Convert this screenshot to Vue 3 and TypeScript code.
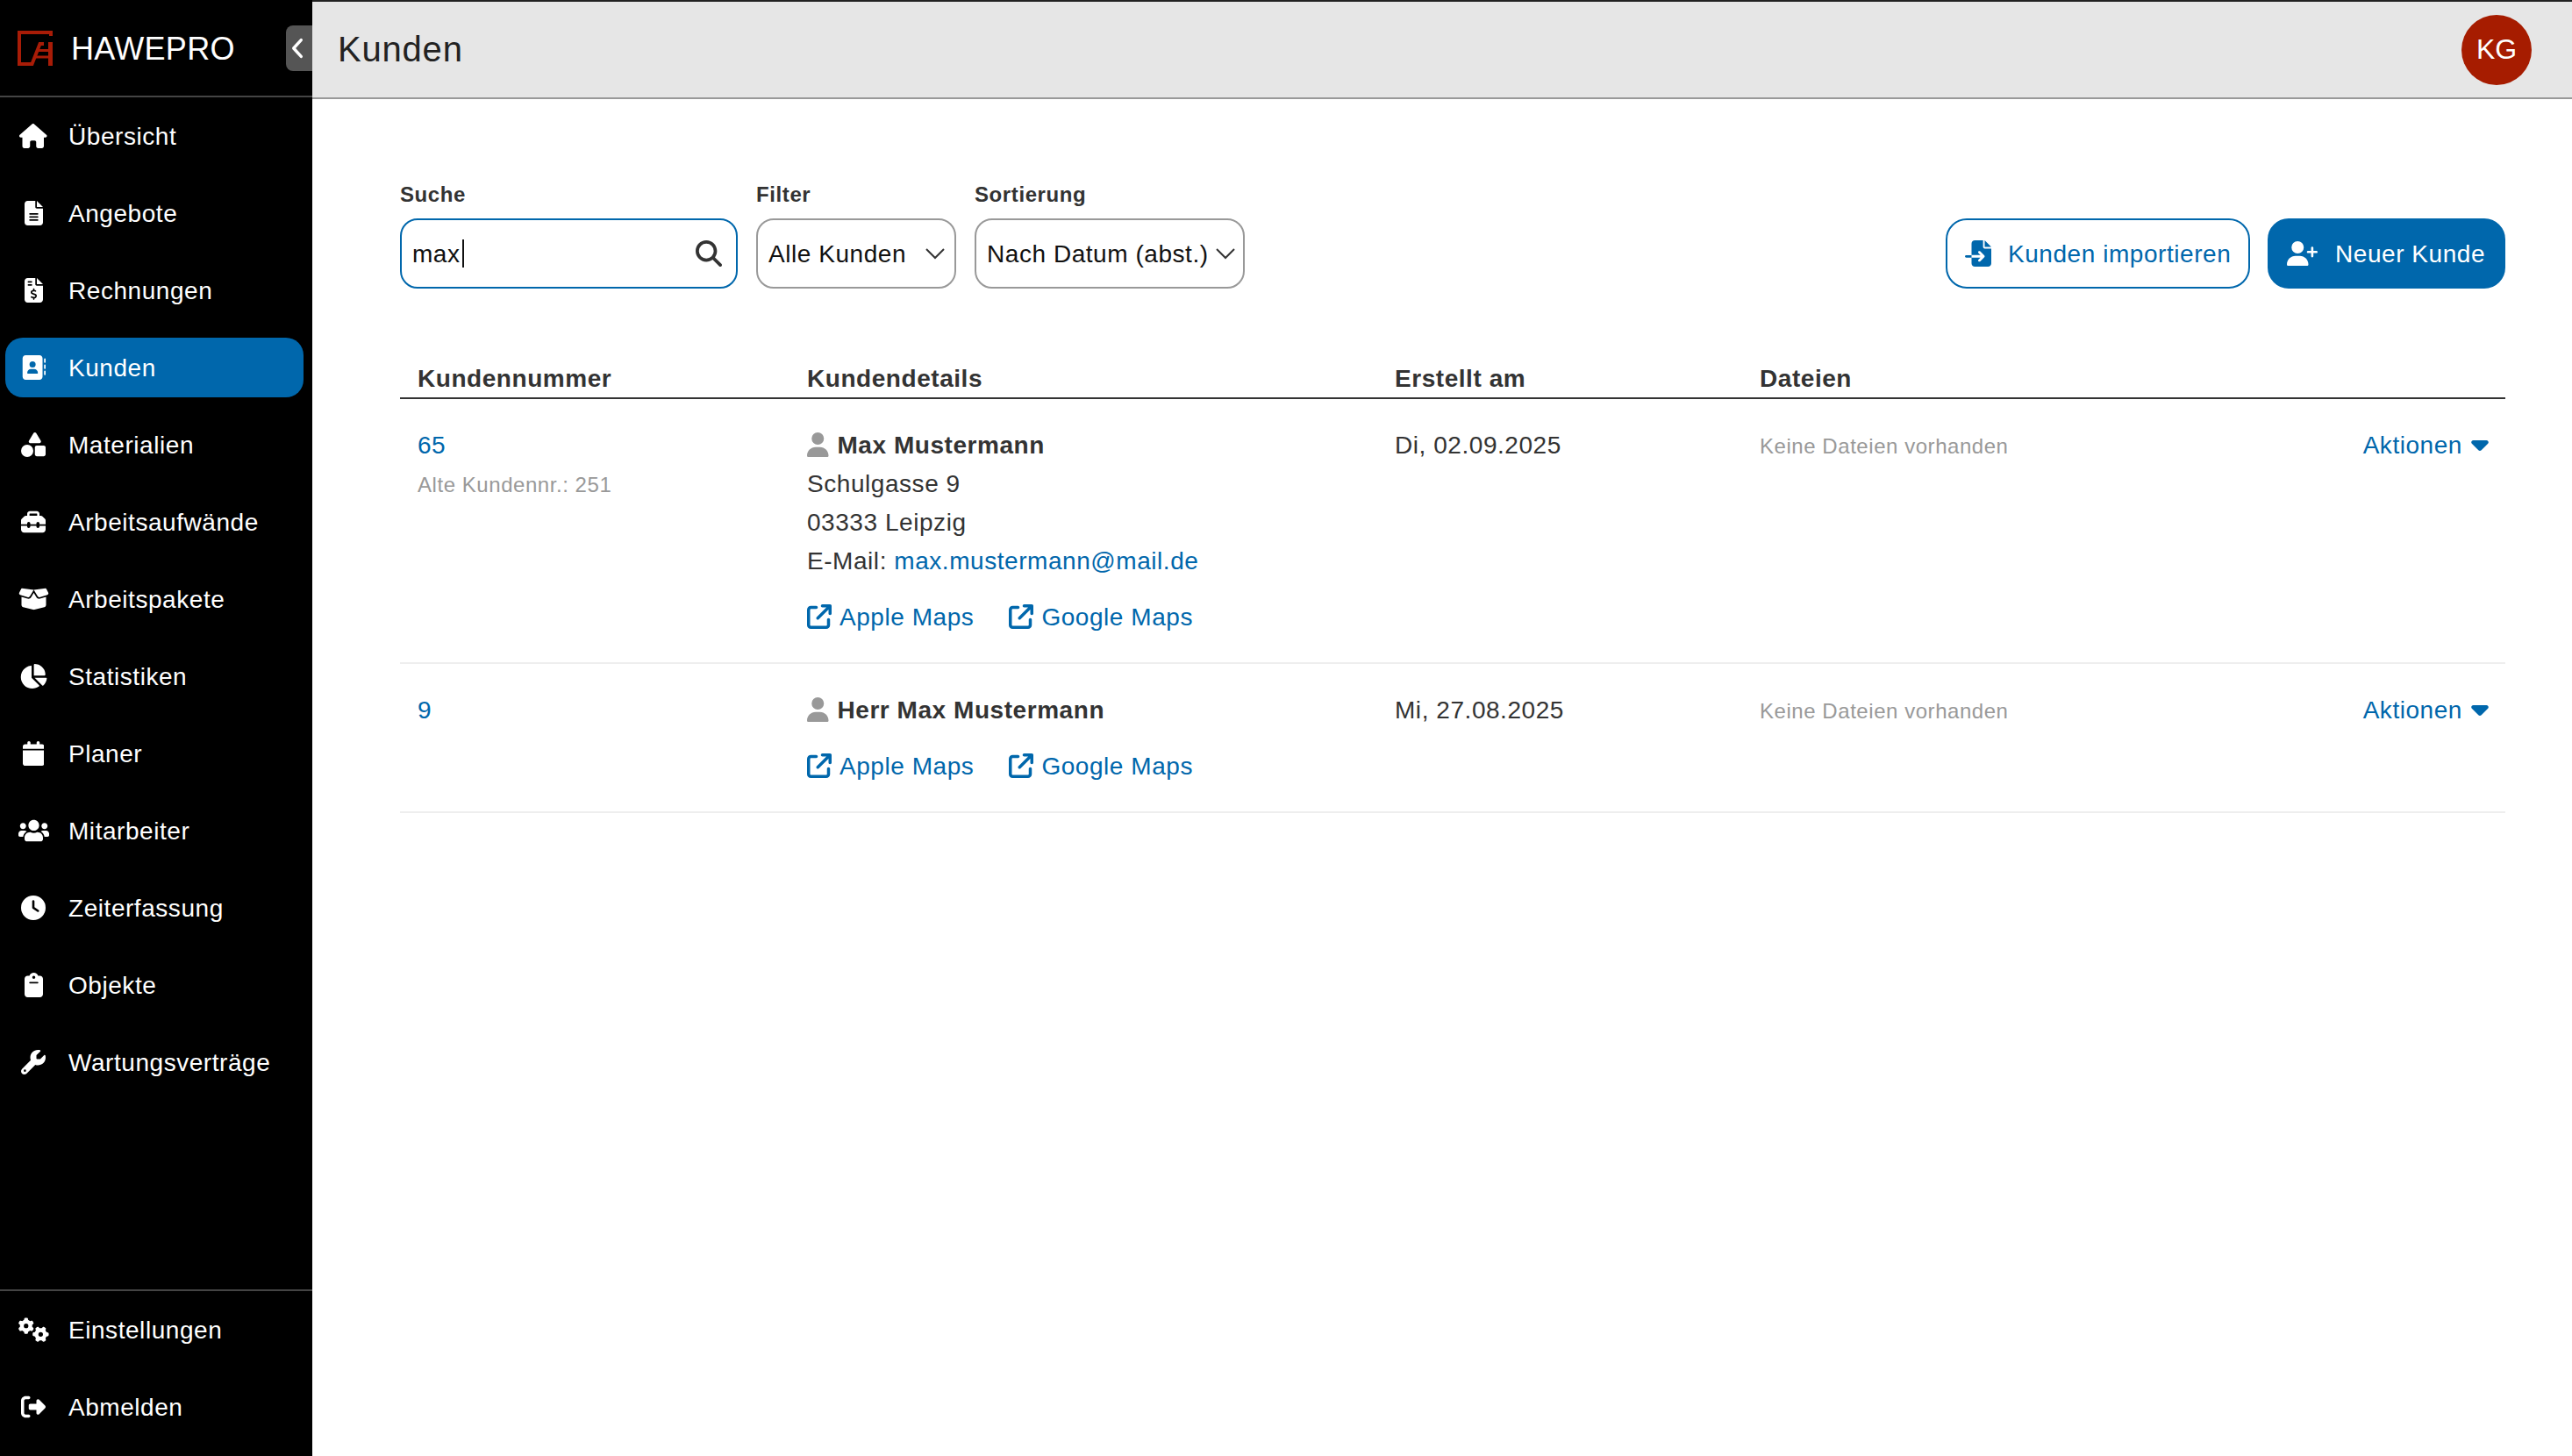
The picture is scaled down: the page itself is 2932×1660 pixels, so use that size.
<script setup lang="ts">
import { ref } from 'vue'

interface NavItem {
  label: string
  box: string
  d: string
  active?: boolean
}

interface Customer {
  number: string
  oldNumber?: string
  name: string
  street?: string
  city?: string
  email?: string
  created: string
}

const query = ref('max')

const navItems: NavItem[] = [
  { label: 'Übersicht', box: '0 0 576 512', d: 'M575.8 255.5c0 18-15 32.1-32 32.1h-32l.7 160.2c0 2.7-.2 5.4-.5 8.1V472c0 22.1-17.9 40-40 40H456c-1.1 0-2.2 0-3.3-.1c-1.4 .1-2.8 .1-4.2 .1H416 392c-22.1 0-40-17.9-40-40V448 384c0-17.7-14.3-32-32-32H256c-17.7 0-32 14.3-32 32v64 24c0 22.1-17.9 40-40 40H160 128.1c-1.5 0-3-.1-4.5-.2c-1.2 .1-2.4 .2-3.6 .2H104c-22.1 0-40-17.9-40-40V360c0-.9 0-1.9 .1-2.8V287.6H32c-18 0-32-14-32-32.1c0-9 3-17 10-24L266.4 8c7-7 15-8 22-8s15 2 21 7L564.8 231.5c8 7 12 15 11 24z' },
  { label: 'Angebote', box: '0 0 384 512', d: 'M64 0C28.7 0 0 28.7 0 64V448c0 35.3 28.7 64 64 64H320c35.3 0 64-28.7 64-64V160H256c-17.7 0-32-14.3-32-32V0H64zM256 0V128H384L256 0zM112 256H272c8.8 0 16 7.2 16 16s-7.2 16-16 16H112c-8.8 0-16-7.2-16-16s7.2-16 16-16zm0 64H272c8.8 0 16 7.2 16 16s-7.2 16-16 16H112c-8.8 0-16-7.2-16-16s7.2-16 16-16zm0 64H272c8.8 0 16 7.2 16 16s-7.2 16-16 16H112c-8.8 0-16-7.2-16-16s7.2-16 16-16z' },
  { label: 'Rechnungen', box: '0 0 384 512', d: 'M64 0C28.7 0 0 28.7 0 64V448c0 35.3 28.7 64 64 64H320c35.3 0 64-28.7 64-64V160H256c-17.7 0-32-14.3-32-32V0H64zM256 0V128H384L256 0zM64 80c0-8.8 7.2-16 16-16h64c8.8 0 16 7.2 16 16s-7.2 16-16 16H80c-8.8 0-16-7.2-16-16zm0 64c0-8.8 7.2-16 16-16h64c8.8 0 16 7.2 16 16s-7.2 16-16 16H80c-8.8 0-16-7.2-16-16zm128 72c8.8 0 16 7.2 16 16v17.3c8.5 1.2 16.7 3.1 24.1 5.1c8.5 2.3 13.6 11 11.3 19.6s-11 13.6-19.6 11.3c-11.1-3-22-5.2-32.1-5.3c-8.4-.1-17.4 1.8-23.6 5.5c-5.7 3.4-8.1 7.3-8.1 12.8c0 3.7 1.3 6.5 7.3 10.1c6.9 4.1 16.6 7.1 29.2 10.9l.5 .1 0 0 0 0c11.3 3.4 25.3 7.6 36.3 14.6c12.1 7.6 22.4 19.7 22.7 38.2c.3 19.3-9.6 33.3-22.9 41.6c-7.7 4.8-16.4 7.6-25.1 9.1V440c0 8.8-7.2 16-16 16s-16-7.2-16-16V422.2c-11.2-2.1-21.7-5.7-30.9-8.9l0 0c-2.1-.7-4.2-1.4-6.2-2.1c-8.4-2.8-12.9-11.9-10.1-20.2s11.9-12.9 20.2-10.1c2.5 .8 4.8 1.6 7.1 2.4l0 0 0 0 0 0c13.6 4.6 24.6 8.4 36.3 8.7c9.1 .3 17.9-1.7 23.7-5.3c5.1-3.2 7.9-7.3 7.8-14c-.1-4.6-1.8-7.8-7.7-11.6c-6.8-4.3-16.5-7.4-29-11.2l-1.6-.5 0 0c-11-3.3-24.3-7.3-34.8-13.7c-12-7.2-22.6-18.9-22.7-37.3c-.1-19.4 10.8-32.8 23.8-40.5c7.5-4.4 15.8-7.2 24.1-8.7V232c0-8.8 7.2-16 16-16z' },
  { label: 'Kunden', box: '0 0 512 512', active: true, d: 'M96 0C60.7 0 32 28.7 32 64V448c0 35.3 28.7 64 64 64H384c35.3 0 64-28.7 64-64V64c0-35.3-28.7-64-64-64H96zM208 288h64c44.2 0 80 35.8 80 80c0 8.8-7.2 16-16 16H144c-8.8 0-16-7.2-16-16c0-44.2 35.8-80 80-80zm-32-96a64 64 0 1 1 128 0 64 64 0 1 1 -128 0zM512 80c0-8.8-7.2-16-16-16s-16 7.2-16 16v64c0 8.8 7.2 16 16 16s16-7.2 16-16V80zM496 192c-8.8 0-16 7.2-16 16v64c0 8.8 7.2 16 16 16s16-7.2 16-16V208c0-8.8-7.2-16-16-16zm16 144c0-8.8-7.2-16-16-16s-16 7.2-16 16v64c0 8.8 7.2 16 16 16s16-7.2 16-16V336z' },
  { label: 'Materialien', box: '0 0 512 512', d: 'M315.4 15.5C309.7 5.9 299.2 0 288 0s-21.7 5.9-27.4 15.5l-96 160c-5.9 9.9-6.1 22.2-.4 32.2s16.3 16.2 27.8 16.2H384c11.5 0 22.2-6.2 27.8-16.2s5.5-22.3-.4-32.2l-96-160zM288 312V456c0 22.1 17.9 40 40 40H472c22.1 0 40-17.9 40-40V312c0-22.1-17.9-40-40-40H328c-22.1 0-40 17.9-40 40zM128 512a128 128 0 1 0 0-256 128 128 0 1 0 0 256z' },
  { label: 'Arbeitsaufwände', box: '0 0 512 512', d: 'M176 88v40H336V88c0-4.4-3.6-8-8-8H184c-4.4 0-8 3.6-8 8zm-48 40V88c0-30.9 25.1-56 56-56H328c30.9 0 56 25.1 56 56v40h28.1c12.7 0 24.9 5.1 33.9 14.1l51.9 51.9c9 9 14.1 21.2 14.1 33.9V304H384V288c0-17.7-14.3-32-32-32s-32 14.3-32 32v16H192V288c0-17.7-14.3-32-32-32s-32 14.3-32 32v16H0V227.9c0-12.7 5.1-24.9 14.1-33.9l51.9-51.9c9-9 21.2-14.1 33.9-14.1H128zM0 416V336H128v16c0 17.7 14.3 32 32 32s32-14.3 32-32V336H320v16c0 17.7 14.3 32 32 32s32-14.3 32-32V336H512v80c0 35.3-28.7 64-64 64H64c-35.3 0-64-28.7-64-64z' },
  { label: 'Arbeitspakete', box: '0 0 640 512', d: 'M58.9 42.1c3-6.1 9.6-9.6 16.3-8.7L320 64 564.8 33.4c6.7-.8 13.3 2.7 16.3 8.7l41.7 83.4c9 17.9-.6 39.6-19.8 45.1L439.6 217.3c-13.9 4-28.8-1.9-36.2-14.3L320 64 236.6 203c-7.4 12.4-22.3 18.3-36.2 14.3L37.1 170.6c-19.3-5.5-28.8-27.2-19.8-45.1L58.9 42.1zM321.1 128l54.9 91.4c14.9 24.8 44.6 36.6 72.5 28.6L576 211.6v167c0 22-15 41.2-36.4 46.6l-204.1 51c-10.2 2.6-20.9 2.6-31 0l-204.1-51C79 419.7 64 400.5 64 378.5v-167L191.6 248c27.8 8 57.6-3.8 72.5-28.6L318.9 128h2.2z' },
  { label: 'Statistiken', box: '0 0 576 512', d: 'M304 240V16.6c0-9 7-16.6 16-16.6C443.7 0 544 100.3 544 224c0 9-7.6 16-16.6 16H304zM32 272C32 150.7 122.1 50.3 239 34.3c9.2-1.3 17 6.1 17 15.4V288L412.5 444.5c6.7 6.7 6.2 17.7-1.5 23.1C371.8 495.6 323.8 512 272 512C139.5 512 32 404.6 32 272zm526.4 16c9.3 0 16.6 7.8 15.4 17c-7.7 55.9-34.6 105.6-73.9 142.3c-6 5.6-15.4 5.2-21.2-.7L320 288H558.4z' },
  { label: 'Planer', box: '0 0 448 512', d: 'M96 32V64H48C21.5 64 0 85.5 0 112v48H448V112c0-26.5-21.5-48-48-48H352V32c0-17.7-14.3-32-32-32s-32 14.3-32 32V64H160V32c0-17.7-14.3-32-32-32S96 14.3 96 32zM448 192H0V464c0 26.5 21.5 48 48 48H400c26.5 0 48-21.5 48-48V192z' },
  { label: 'Mitarbeiter', box: '0 0 640 512', d: 'M96 224c35.3 0 64-28.7 64-64s-28.7-64-64-64-64 28.7-64 64 28.7 64 64 64zm448 0c35.3 0 64-28.7 64-64s-28.7-64-64-64-64 28.7-64 64 28.7 64 64 64zm32 32h-64c-17.6 0-33.5 7.1-45.1 18.6 40.3 22.1 68.9 62 75.1 109.4h66c17.7 0 32-14.3 32-32v-32c0-35.3-28.7-64-64-64zm-256 0c61.9 0 112-50.1 112-112S381.900 32 320 32 208 82.100 208 144s50.100 112 112 112zm76.800 32h-8.300c-20.800 10-43.900 16-68.500 16s-47.600-6-68.500-16h-8.300C179.600 288 128 339.600 128 403.200V432c0 26.500 21.500 48 48 48h288c26.500 0 48-21.500 48-48v-28.800c0-63.600-51.600-115.200-115.200-115.200zm-223.700-13.400C161.500 263.100 145.600 256 128 256H64c-35.300 0-64 28.700-64 64v32c0 17.700 14.300 32 32 32h65.900c6.300-47.400 34.900-87.300 75.200-109.400z' },
  { label: 'Zeiterfassung', box: '0 0 512 512', d: 'M256 0a256 256 0 1 1 0 512A256 256 0 1 1 256 0zM232 120V256c0 8 4 15.5 10.7 20l96 64c11 7.4 25.9 4.4 33.3-6.7s4.4-25.9-6.7-33.3L280 243.2V120c0-13.3-10.7-24-24-24s-24 10.7-24 24z' },
  { label: 'Objekte', box: '0 0 384 512', d: 'M192 0c-41.8 0-77.4 26.7-90.5 64H64C28.7 64 0 92.7 0 128V448c0 35.3 28.7 64 64 64H320c35.3 0 64-28.7 64-64V128c0-35.3-28.7-64-64-64H282.5C269.4 26.7 233.8 0 192 0zm0 64a32 32 0 1 1 0 64 32 32 0 1 1 0-64zM112 192H272c8.8 0 16 7.2 16 16s-7.2 16-16 16H112c-8.8 0-16-7.2-16-16s7.2-16 16-16z' },
  { label: 'Wartungsverträge', box: '0 0 512 512', d: 'M352 320c88.4 0 160-71.6 160-160c0-15.3-2.2-30.1-6.2-44.2c-3.1-10.8-16.4-13.2-24.3-5.3l-76.8 76.8c-3 3-7.1 4.7-11.3 4.7H336c-8.8 0-16-7.2-16-16V118.6c0-4.2 1.7-8.3 4.7-11.3l76.8-76.8c7.9-7.9 5.4-21.2-5.3-24.3C382.1 2.2 367.3 0 352 0C263.6 0 192 71.6 192 160c0 19.1 3.4 37.5 9.5 54.5L19.9 396.1C7.2 408.8 0 426.1 0 444.1C0 481.6 30.4 512 67.9 512c18 0 35.3-7.2 48-19.9L297.5 310.5c17 6.2 35.4 9.5 54.5 9.5zM80 408a24 24 0 1 1 0 48 24 24 0 1 1 0-48z' }
]

const bottomItems: NavItem[] = [
  { label: 'Einstellungen', box: '0 0 640 512', d: 'M308.5 135.3c7.1-6.3 9.9-16.2 6.2-25c-2.3-5.3-4.8-10.5-7.6-15.5L304 89.4c-3-5-6.3-9.9-9.8-14.6c-5.7-7.6-15.7-10.1-24.7-7.1l-28.2 9.3c-10.7-8.8-23-16-36.2-20.9L199 27.1c-1.9-9.3-9.1-16.7-18.5-17.8C173.9 8.4 167.2 8 160.4 8h-.7c-6.8 0-13.5 .4-20.1 1.2c-9.4 1.1-16.6 8.6-18.5 17.8L115 56.1c-13.3 5-25.5 12.1-36.2 20.9L50.5 67.8c-9-3-19-.5-24.7 7.1c-3.5 4.7-6.8 9.6-9.9 14.6l-3 5.3c-2.8 5-5.3 10.2-7.6 15.6c-3.7 8.7-.9 18.6 6.2 25l22.2 19.8C32.6 161.9 32 168.9 32 176s.6 14.1 1.7 20.9L11.5 216.7c-7.1 6.3-9.9 16.2-6.2 25c2.3 5.3 4.8 10.5 7.6 15.6l3 5.2c3 5.1 6.3 9.9 9.9 14.6c5.7 7.6 15.7 10.1 24.7 7.1l28.2-9.3c10.7 8.8 23 16 36.2 20.9l6.1 29.1c1.9 9.3 9.1 16.7 18.5 17.8c6.7 .8 13.5 1.2 20.4 1.2s13.7-.4 20.4-1.2c9.4-1.1 16.6-8.6 18.5-17.8l6.1-29.1c13.3-5 25.5-12.1 36.2-20.9l28.2 9.3c9 3 19 .5 24.7-7.1c3.5-4.7 6.8-9.5 9.8-14.6l3.1-5.4c2.8-5 5.3-10.2 7.6-15.5c3.7-8.7 .9-18.6-6.2-25l-22.2-19.8c1.1-6.8 1.7-13.8 1.7-20.9s-.6-14.1-1.7-20.9l22.2-19.8zM112 176a48 48 0 1 1 96 0 48 48 0 1 1 -96 0zM504.7 500.5c6.3 7.1 16.2 9.9 25 6.2c5.3-2.3 10.5-4.8 15.5-7.6l5.4-3.1c5-3 9.9-6.3 14.6-9.8c7.6-5.7 10.1-15.7 7.1-24.7l-9.3-28.2c8.8-10.7 16-23 20.9-36.2l29.1-6.1c9.3-1.9 16.7-9.1 17.8-18.5c.8-6.7 1.2-13.5 1.2-20.4s-.4-13.7-1.2-20.4c-1.1-9.4-8.6-16.6-17.8-18.5L583.9 307c-5-13.3-12.1-25.5-20.9-36.2l9.3-28.2c3-9 .5-19-7.1-24.7c-4.7-3.5-9.6-6.8-14.6-9.9l-5.3-3c-5-2.8-10.2-5.3-15.6-7.6c-8.7-3.7-18.6-.9-25 6.2l-19.8 22.2c-6.8-1.1-13.8-1.7-20.9-1.7s-14.1 .6-20.9 1.7l-19.8-22.2c-6.3-7.1-16.2-9.9-25-6.2c-5.3 2.3-10.5 4.8-15.6 7.6l-5.2 3c-5.1 3-9.9 6.3-14.6 9.9c-7.6 5.7-10.1 15.7-7.1 24.7l9.3 28.2c-8.8 10.7-16 23-20.9 36.2L315.1 313c-9.3 1.9-16.7 9.1-17.8 18.5c-.8 6.7-1.2 13.5-1.2 20.4s.4 13.7 1.2 20.4c1.1 9.4 8.6 16.6 17.8 18.5l29.1 6.1c5 13.3 12.1 25.5 20.9 36.2l-9.3 28.2c-3 9-.5 19 7.1 24.7c4.7 3.5 9.5 6.8 14.6 9.8l5.4 3.1c5 2.8 10.2 5.3 15.5 7.6c8.7 3.7 18.6 .9 25-6.2l19.8-22.2c6.8 1.1 13.8 1.7 20.9 1.7s14.1-.6 20.9-1.7l19.8 22.2zM464 304a48 48 0 1 1 0 96 48 48 0 1 1 0-96z' },
  { label: 'Abmelden', box: '0 0 512 512', d: 'M377.9 105.9L500.7 228.7c7.2 7.2 11.3 17.1 11.3 27.3s-4.1 20.1-11.3 27.3L377.9 406.1c-6.4 6.4-15 9.9-24 9.9c-18.7 0-33.9-15.2-33.9-33.9l0-62.1-128 0c-17.7 0-32-14.3-32-32l0-64c0-17.7 14.3-32 32-32l128 0 0-62.1c0-18.7 15.2-33.9 33.9-33.9c9 0 17.6 3.6 24 9.9zM160 96L96 96c-17.7 0-32 14.3-32 32l0 256c0 17.7 14.3 32 32 32l64 0c17.7 0 32 14.3 32 32s-14.3 32-32 32l-64 0c-53 0-96-43-96-96L0 128C0 75 43 32 96 32l64 0c17.7 0 32 14.3 32 32s-14.3 32-32 32z' }
]

const customers: Customer[] = [
  {
    number: '65',
    oldNumber: '251',
    name: 'Max Mustermann',
    street: 'Schulgasse 9',
    city: '03333 Leipzig',
    email: 'max.mustermann@mail.de',
    created: 'Di, 02.09.2025'
  },
  { number: '9', name: 'Herr Max Mustermann', created: 'Mi, 27.08.2025' }
]

const externalIcon =
  'M320 0c-17.7 0-32 14.3-32 32s14.3 32 32 32h82.7L201.4 265.4c-12.5 12.5-12.5 32.8 0 45.3s32.8 12.5 45.3 0L448 109.3V192c0 17.7 14.3 32 32 32s32-14.3 32-32V32c0-17.7-14.3-32-32-32H320zM80 32C35.8 32 0 67.8 0 112V432c0 44.2 35.8 80 80 80H400c44.2 0 80-35.8 80-80V320c0-17.7-14.3-32-32-32s-32 14.3-32 32V432c0 8.8-7.2 16-16 16H80c-8.8 0-16-7.2-16-16V112c0-8.8 7.2-16 16-16H192c17.7 0 32-14.3 32-32s-14.3-32-32-32H80z'
</script>

<template>
  <div class="app">
    <aside class="sidebar">
      <div class="brand">
        <svg class="logo" viewBox="0 0 40 40" fill="none" stroke="#a81c07">
          <path d="M38 6V2H2V38H16.500L25.500 15H30" stroke-width="4" />
          <path d="M37.500 13V40" stroke-width="5" />
          <path d="M23 22.500H36M20 30H36" stroke-width="3" />
        </svg>
        <span class="brand-name">HAWEPRO</span>
        <button class="collapse" type="button">
          <svg viewBox="0 0 16 28" width="14" height="24" fill="none" stroke="#fff" stroke-width="4" stroke-linecap="round" stroke-linejoin="round">
            <path d="M13 3 3 14l10 11" />
          </svg>
        </button>
      </div>
      <nav class="nav">
        <a v-for="item in navItems" :key="item.label" class="nav-item" :class="{ active: item.active }">
          <span class="nav-icon">
            <svg :viewBox="item.box" height="28" fill="currentColor"><path :d="item.d" /></svg>
          </span>
          <span class="nav-label">{{ item.label }}</span>
        </a>
      </nav>
      <nav class="nav nav-bottom">
        <a v-for="item in bottomItems" :key="item.label" class="nav-item">
          <span class="nav-icon">
            <svg :viewBox="item.box" height="28" fill="currentColor"><path :d="item.d" /></svg>
          </span>
          <span class="nav-label">{{ item.label }}</span>
        </a>
      </nav>
    </aside>

    <div class="page">
      <header class="topbar">
        <h1>Kunden</h1>
        <div class="avatar">KG</div>
      </header>

      <main class="content">
        <div class="toolbar">
          <label class="field">
            <span class="field-label">Suche</span>
            <span class="search">
              <input v-model="query" type="text" />
              <span class="caret"></span>
              <svg viewBox="0 0 512 512" width="30" height="30" fill="#333">
                <path d="M416 208c0 45.9-14.9 88.3-40 122.7L502.6 457.4c12.5 12.5 12.5 32.8 0 45.3s-32.8 12.5-45.3 0L330.7 376c-34.4 25.2-76.8 40-122.7 40C93.1 416 0 322.9 0 208S93.1 0 208 0S416 93.1 416 208zM208 352a144 144 0 1 0 0-288 144 144 0 1 0 0 288z" />
              </svg>
            </span>
          </label>
          <div class="field">
            <span class="field-label">Filter</span>
            <div class="select filter-select">
              <span class="select-text">Alle Kunden</span>
              <svg viewBox="0 0 24 14" width="24" height="14" fill="none" stroke="#333" stroke-width="2"><path d="M2 2l10 10L22 2" /></svg>
            </div>
          </div>
          <div class="field">
            <span class="field-label">Sortierung</span>
            <div class="select sort-select">
              <span class="select-text">Nach Datum (abst.)</span>
              <svg viewBox="0 0 24 14" width="24" height="14" fill="none" stroke="#333" stroke-width="2"><path d="M2 2l10 10L22 2" /></svg>
            </div>
          </div>
          <div class="actions">
            <button class="btn btn-outline" type="button">
              <svg viewBox="0 0 512 512" height="30" fill="currentColor">
                <path d="M128 64c0-35.3 28.7-64 64-64H352V128c0 17.7 14.3 32 32 32H512V448c0 35.3-28.7 64-64 64H192c-35.3 0-64-28.7-64-64V336H302.1l-39 39c-9.4 9.4-9.4 24.6 0 33.9s24.6 9.4 33.9 0l80-80c9.4-9.4 9.4-24.6 0-33.9l-80-80c-9.4-9.4-24.6-9.4-33.9 0s-9.4 24.6 0 33.9l39 39H128V64zm0 224v48H24c-13.3 0-24-10.7-24-24s10.7-24 24-24H128zM512 128H384V0L512 128z" />
              </svg>
              <span class="btn-text">Kunden importieren</span>
            </button>
            <button class="btn btn-solid" type="button">
              <svg viewBox="0 0 640 512" height="28" fill="currentColor">
                <path d="M96 128a128 128 0 1 1 256 0A128 128 0 1 1 96 128zM0 482.3C0 383.8 79.8 304 178.3 304h91.4C368.2 304 448 383.8 448 482.3c0 16.4-13.3 29.7-29.7 29.7H29.7C13.3 512 0 498.7 0 482.3zM504 312V248H440c-13.3 0-24-10.7-24-24s10.7-24 24-24h64V136c0-13.3 10.7-24 24-24s24 10.7 24 24v64h64c13.3 0 24 10.7 24 24s-10.7 24-24 24H552v64c0 13.3-10.7 24-24 24s-24-10.7-24-24z" />
              </svg>
              <span class="btn-text">Neuer Kunde</span>
            </button>
          </div>
        </div>

        <div class="table-head">
          <span>Kundennummer</span>
          <span>Kundendetails</span>
          <span>Erstellt am</span>
          <span>Dateien</span>
        </div>

        <div v-for="c in customers" :key="c.number" class="row">
          <div>
            <a class="link">{{ c.number }}</a>
            <div v-if="c.oldNumber" class="muted">Alte Kundennr.: {{ c.oldNumber }}</div>
          </div>
          <div>
            <div class="name">
              <svg viewBox="0 0 448 512" height="28" fill="#999">
                <path d="M224 256A128 128 0 1 0 224 0a128 128 0 1 0 0 256zm-45.7 48C79.8 304 0 383.8 0 482.3C0 498.7 13.3 512 29.7 512H418.3c16.4 0 29.7-13.3 29.7-29.7C448 383.8 368.2 304 269.7 304H178.3z" />
              </svg>
              {{ c.name }}
            </div>
            <div v-if="c.street">{{ c.street }}</div>
            <div v-if="c.city">{{ c.city }}</div>
            <div v-if="c.email">E-Mail: <a class="link">{{ c.email }}</a></div>
            <div class="maps">
              <a class="link map-link">
                <svg viewBox="0 0 512 512" width="28" height="28" fill="currentColor"><path :d="externalIcon" /></svg>
                Apple Maps
              </a>
              <a class="link map-link">
                <svg viewBox="0 0 512 512" width="28" height="28" fill="currentColor"><path :d="externalIcon" /></svg>
                Google Maps
              </a>
            </div>
          </div>
          <div>{{ c.created }}</div>
          <div class="muted files">Keine Dateien vorhanden</div>
          <div class="row-actions">
            <a class="link">Aktionen</a>
            <svg viewBox="0 0 20 12" width="20" height="12" fill="#0067ac"><path d="M2.5 0h15c2 0 3 2.400 1.700 3.800l-7.500 7.500c-.9.9-2.500.9-3.400 0L.8 3.800C-.5 2.400.5 0 2.500 0z" /></svg>
          </div>
        </div>
      </main>
    </div>
  </div>
</template>

<style>
html,
body {
  margin: 0;
  background: #fff;
  overflow: hidden;
}
</style>

<style scoped>
.app {
  display: flex;
  width: 2932px;
  height: 1660px;
  font-family: 'Liberation Sans', Arial, sans-serif;
  font-size: 28px;
  letter-spacing: 0.55px;
  color: #333;
}

.sidebar {
  flex: 0 0 356px;
  display: flex;
  flex-direction: column;
  background: #000;
  color: #fff;
  letter-spacing: 0.55px;
}

.brand {
  position: relative;
  display: flex;
  align-items: center;
  gap: 21px;
  height: 111px;
  padding-left: 20px;
  border-bottom: 2px solid #444;
  box-sizing: border-box;
}

.logo {
  width: 40px;
  height: 40px;
}

.brand-name {
  padding-top: 2px;
  font-size: 36px;
  letter-spacing: 0.3px;
}

.collapse {
  position: absolute;
  top: 29px;
  right: 0;
  width: 30px;
  height: 52px;
  padding: 0 4px 0 0;
  display: flex;
  align-items: center;
  justify-content: center;
  background: #555;
  border: 0;
  border-radius: 8px 0 0 8px;
}

.nav {
  display: flex;
  flex-direction: column;
  gap: 20px;
  padding: 10px 10px 0 6px;
}

.nav-bottom {
  margin-top: auto;
  padding-top: 10px;
  padding-bottom: 22px;
  border-top: 2px solid #444;
}

.nav-item {
  display: flex;
  align-items: center;
  gap: 20px;
  height: 68px;
  padding-left: 12px;
  border-radius: 20px;
}

.nav-item.active {
  background: #0067ac;
}

.nav-icon {
  flex: 0 0 40px;
  display: flex;
  justify-content: center;
}

.nav-label {
  padding-top: 2px;
}

.page {
  flex: 1;
  display: flex;
  flex-direction: column;
  min-width: 0;
}

.topbar {
  display: flex;
  align-items: center;
  justify-content: space-between;
  height: 113px;
  box-sizing: border-box;
  padding: 0 46px 0 29px;
  background: #e6e6e6;
  border-top: 2px solid #222;
  border-bottom: 2px solid #999;
}

.topbar h1 {
  margin: 0;
  font-size: 40px;
  font-weight: 400;
  letter-spacing: 0.8px;
  color: #222;
}

.avatar {
  display: flex;
  align-items: center;
  justify-content: center;
  width: 80px;
  height: 80px;
  border-radius: 50%;
  background: #a61c00;
  color: #fff;
  font-size: 32px;
  letter-spacing: 0;
}

.content {
  padding: 94px 76px 0 100px;
}

.toolbar {
  display: flex;
  align-items: flex-end;
  gap: 21px;
}

.field {
  display: flex;
  flex-direction: column;
  gap: 12px;
}

.field-label {
  font-size: 24px;
  line-height: 30px;
  font-weight: 700;
  letter-spacing: 0.6px;
}

.search,
.select {
  display: flex;
  align-items: center;
  height: 80px;
  box-sizing: border-box;
  padding: 0 12px;
  background: #fff;
  border: 2px solid #999;
  border-radius: 20px;
  color: #111;
}

.search {
  width: 385px;
  border-color: #0067ac;
}

.search input {
  width: 2.1em;
  padding: 2px 0 0;
  border: 0;
  outline: 0;
  background: none;
  font: inherit;
  letter-spacing: inherit;
  color: inherit;
}

.caret {
  width: 2px;
  height: 32px;
  background: #111;
  margin-left: -2px;
}

.search svg {
  margin-left: auto;
  margin-right: 4px;
}

.select {
  justify-content: space-between;
  padding-left: 12px;
}

.select-text,
.btn-text {
  padding-top: 2px;
}

.filter-select {
  width: 228px;
  padding-right: 10px;
}

.sort-select {
  width: 308px;
  padding-right: 8px;
  white-space: nowrap;
}

.actions {
  display: flex;
  gap: 20px;
  margin-left: auto;
}

.btn {
  display: flex;
  align-items: center;
  height: 80px;
  box-sizing: border-box;
  border-radius: 24px;
  border: 2px solid #0067ac;
  font: inherit;
  letter-spacing: inherit;
}

.btn-outline {
  width: 347px;
  gap: 19px;
  padding: 0 0 0 20px;
  background: #fff;
  color: #0067ac;
}

.btn-solid {
  width: 271px;
  gap: 20px;
  padding: 0 0 0 20px;
  background: #0067ac;
  color: #fff;
}

.table-head,
.row {
  display: grid;
  grid-template-columns: 444px 670px 416px 1fr auto;
}

.table-head {
  margin-top: 78px;
  height: 48px;
  box-sizing: border-box;
  padding-top: 11px;
  border-bottom: 2px solid #333;
  line-height: 28px;
  font-weight: 700;
}

.table-head span {
  padding-left: 20px;
}

.row {
  padding: 31px 0 29px;
  border-bottom: 2px solid #eee;
  line-height: 44px;
}

.row > div {
  padding-left: 20px;
}

.link {
  color: #0067ac;
}

.muted {
  color: #999;
  font-size: 24px;
}

.muted:not(.files) {
  padding-top: 1px;
}

.files {
  line-height: 46px;
}

.name {
  display: flex;
  align-items: center;
  gap: 10px;
  font-weight: 700;
}

.name svg {
  margin-top: -2px;
}

.maps {
  display: flex;
  gap: 40px;
  margin-top: 20px;
}

.map-link {
  display: flex;
  align-items: center;
  gap: 9px;
}

.map-link svg {
  margin-top: -2px;
}

.row-actions {
  display: flex;
  align-items: flex-start;
  gap: 10px;
  padding-right: 19px;
}

.row-actions svg {
  margin-top: 16px;
}
</style>
